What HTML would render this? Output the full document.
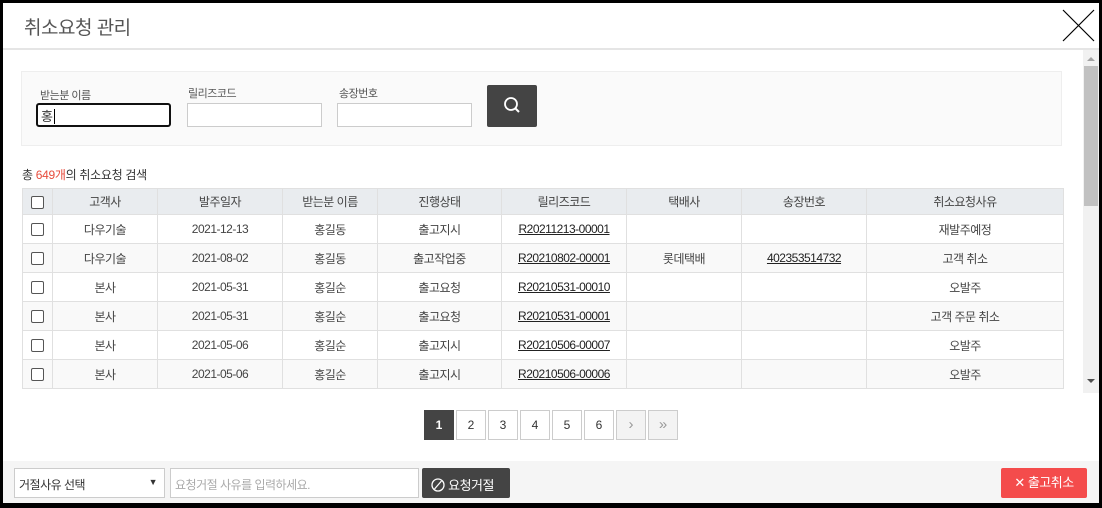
<!DOCTYPE html>
<html><head><meta charset="utf-8"><style>
*{box-sizing:border-box;margin:0;padding:0}
body{width:1102px;height:508px;background:#000;position:relative;overflow:hidden;font-family:"Liberation Sans","Noto Sans CJK KR",sans-serif;color:#333;font-size:12px}
.win{position:absolute;left:3px;top:3px;width:1096px;height:500px;background:#fff;overflow:hidden}
.a{position:absolute}
.title{left:21px;top:10px;font-size:19px;color:#555;letter-spacing:-0.5px}
.hline{left:0;top:45px;width:1096px;height:2px;background:#e5e5e5}
.search{left:18px;top:68px;width:1041px;height:75px;background:#fafafa;border:1px solid #eee}
.lbl{font-size:11px;color:#555;letter-spacing:-0.5px}
.inp{background:#fff;border:1px solid #ccc;height:24px;width:135px}
table{position:absolute;left:19px;top:185px;width:1041px;border-collapse:collapse;table-layout:fixed;font-size:12px;letter-spacing:-0.5px}
td,th{border:1px solid #e0e0e0;text-align:center;height:29px;font-weight:normal;color:#444;white-space:nowrap;overflow:hidden}
th{background:#e9ecef;height:26px}
tr:nth-child(odd) td{background:#f9f9f9}
u{color:#222}
.cb{display:inline-block;width:13px;height:13px;border:1px solid #555;border-radius:2px;background:#fff;vertical-align:middle}
.pg{top:407px;width:30px;height:30px;border:1px solid #ccc;background:#fff;text-align:center;line-height:28px;font-size:12px;color:#333}
.foot{left:0;top:458px;width:1096px;height:42px;background:#f5f5f5}
</style></head><body><div class="win">
<div class="a title">취소요청 관리</div>
<svg class="a" style="left:1059px;top:6px" width="33" height="33"><path d="M1 1L32 32M32 1L1 32" stroke="#000" stroke-width="1.2"/></svg>
<div class="a hline"></div>
<div class="a" style="left:1080px;top:47px;width:16px;height:343px;background:#f1f1f1"></div>
<div class="a" style="left:1081px;top:63px;width:14px;height:140px;background:#c1c1c1"></div>
<div class="a" style="left:1084px;top:54px;width:0;height:0;border-left:4px solid transparent;border-right:4px solid transparent;border-bottom:4px solid #a3a3a3"></div>
<div class="a" style="left:1084px;top:376px;width:0;height:0;border-left:4px solid transparent;border-right:4px solid transparent;border-top:4px solid #505050"></div>
<div class="a search"></div>
<div class="a lbl" style="left:37px;top:84px">받는분 이름</div>
<div class="a lbl" style="left:185px;top:82px">릴리즈코드</div>
<div class="a lbl" style="left:336px;top:82px">송장번호</div>
<div class="a inp" style="left:33px;top:100px;border:2px solid #111;border-radius:3px;padding:1px 3px;font-size:13px">홍<span style="border-left:1px solid #000;margin-left:1px"></span></div>
<div class="a inp" style="left:184px;top:100px"></div>
<div class="a inp" style="left:334px;top:100px"></div>
<div class="a" style="left:484px;top:82px;width:50px;height:42px;background:#444;border-radius:2px"><svg width="50" height="42"><circle cx="24" cy="19" r="6" stroke="#fff" stroke-width="1.8" fill="none"/><path d="M28.5 23.5L32 27" stroke="#fff" stroke-width="2"/></svg></div>
<div class="a" style="left:19px;top:163px;font-size:12px;letter-spacing:-0.3px">총 <span style="color:#e74c3c">649개</span>의 취소요청 검색</div>
<table>
<colgroup><col style="width:30px"><col style="width:105px"><col style="width:125px"><col style="width:95px"><col style="width:124px"><col style="width:125px"><col style="width:115px"><col style="width:125px"><col style="width:197px"></colgroup>
<tr><th><span class="cb"></span></th><th>고객사</th><th>발주일자</th><th>받는분 이름</th><th>진행상태</th><th>릴리즈코드</th><th>택배사</th><th>송장번호</th><th>취소요청사유</th></tr>
<tr><td><span class="cb"></span></td><td>다우기술</td><td>2021-12-13</td><td>홍길동</td><td>출고지시</td><td><u>R20211213-00001</u></td><td></td><td></td><td>재발주예정</td></tr>
<tr><td><span class="cb"></span></td><td>다우기술</td><td>2021-08-02</td><td>홍길동</td><td>출고작업중</td><td><u>R20210802-00001</u></td><td>롯데택배</td><td><u>402353514732</u></td><td>고객 취소</td></tr>
<tr><td><span class="cb"></span></td><td>본사</td><td>2021-05-31</td><td>홍길순</td><td>출고요청</td><td><u>R20210531-00010</u></td><td></td><td></td><td>오발주</td></tr>
<tr><td><span class="cb"></span></td><td>본사</td><td>2021-05-31</td><td>홍길순</td><td>출고요청</td><td><u>R20210531-00001</u></td><td></td><td></td><td>고객 주문 취소</td></tr>
<tr><td><span class="cb"></span></td><td>본사</td><td>2021-05-06</td><td>홍길순</td><td>출고지시</td><td><u>R20210506-00007</u></td><td></td><td></td><td>오발주</td></tr>
<tr><td><span class="cb"></span></td><td>본사</td><td>2021-05-06</td><td>홍길순</td><td>출고지시</td><td><u>R20210506-00006</u></td><td></td><td></td><td>오발주</td></tr>
</table>
<div class="a" style="left:0;top:386px;width:1080px;height:72px;background:#fff"></div>
<div class="a pg" style="left:421px;background:#444;color:#fff;border-color:#444;font-weight:bold">1</div>
<div class="a pg" style="left:453px">2</div>
<div class="a pg" style="left:485px">3</div>
<div class="a pg" style="left:517px">4</div>
<div class="a pg" style="left:549px">5</div>
<div class="a pg" style="left:581px">6</div>
<div class="a pg" style="left:613px;background:#f3f3f3;color:#999;font-size:15px">›</div>
<div class="a pg" style="left:645px;background:#f3f3f3;color:#999;font-size:15px">»</div>
<div class="a foot"></div>
<div class="a" style="left:11px;top:465px;width:151px;height:30px;background:#fff;border:1px solid #ccc;padding:7px 4px;font-size:12px;letter-spacing:-0.5px">거절사유 선택<span style="position:absolute;right:7px;top:8px;font-size:9px">▼</span></div>
<div class="a" style="left:167px;top:465px;width:249px;height:30px;background:#fff;border:1px solid #ccc;padding:7px 4px;color:#aaa;letter-spacing:-0.5px">요청거절 사유를 입력하세요.</div>
<div class="a" style="left:419px;top:465px;width:88px;height:30px;background:#444;color:#fff;border-radius:2px;padding:7px 0 0 9px;font-size:13px;letter-spacing:-0.5px"><svg width="14" height="14" style="vertical-align:-2px"><circle cx="7" cy="7" r="6" stroke="#fff" stroke-width="1.3" fill="none"/><path d="M10.5 3L3.5 11" stroke="#fff" stroke-width="1.3"/></svg> 요청거절</div>
<div class="a" style="left:998px;top:465px;width:86px;height:30px;background:#f44c4c;color:#fff;border-radius:2px;text-align:center;line-height:30px;font-size:13px;letter-spacing:-0.5px">✕ 출고취소</div>
</div></body></html>
